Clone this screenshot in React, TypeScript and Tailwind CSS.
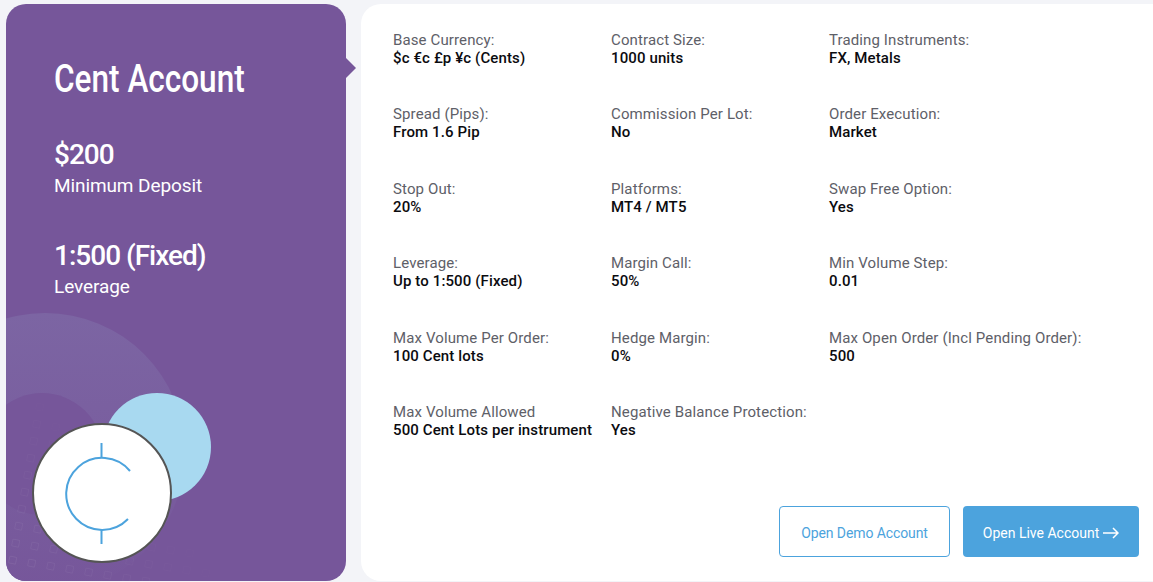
const specs = [
  ["Base Currency:", "$c €c £p ¥c (Cents)"],
  ["Contract Size:", "1000 units"],
  ["Trading Instruments:", "FX, Metals"],
  ["Spread (Pips):", "From 1.6 Pip"],
  ["Commission Per Lot:", "No"],
  ["Order Execution:", "Market"],
  ["Stop Out:", "20%"],
  ["Platforms:", "MT4 / MT5"],
  ["Swap Free Option:", "Yes"],
  ["Leverage:", "Up to 1:500 (Fixed)"],
  ["Margin Call:", "50%"],
  ["Min Volume Step:", "0.01"],
  ["Max Volume Per Order:", "100 Cent lots"],
  ["Hedge Margin:", "0%"],
  ["Max Open Order (Incl Pending Order):", "500"],
  ["Max Volume Allowed", "500 Cent Lots per instrument"],
  ["Negative Balance Protection:", "Yes"],
];

const squares: { x: number; y: number; opacity: number }[] = [];
for (let row = 0; row < 11; row++) {
  for (let col = 0; col < 13; col++) {
    const x = 4 + col * 19 + row * 3;
    const y = 282 - row * 17 + col * 3;
    const fade = 1 - (x + (290 - y)) / 230;
    if (fade > 0 && y < 304) {
      squares.push({ x, y, opacity: 0.07 * fade });
    }
  }
}

const CardArt = () => {
  return (
    <div className="absolute inset-0 overflow-hidden rounded-[20px]">
      <div className="absolute left-[-101px] top-[309px] h-[280px] w-[280px] rounded-full bg-linear-to-b from-[#7c65a3] to-[#76569a]" />
      <div className="absolute left-[-25px] top-[389px] h-[122px] w-[122px] rounded-full bg-[#76569a]" />
      <svg className="absolute left-0 top-[270px] h-[307px] w-[340px]" viewBox="0 0 340 307" fill="none">
        {squares.map((square, index) => (
          <rect
            key={index}
            x={square.x}
            y={square.y}
            width="7"
            height="7"
            rx="1"
            stroke="#ffffff"
            strokeOpacity={square.opacity}
            transform={`rotate(12 ${square.x} ${square.y})`}
          />
        ))}
      </svg>
      <div className="absolute left-[97px] top-[389px] h-[108px] w-[108px] rounded-full bg-[#a8d9f0]" />
      <div className="absolute left-[26px] top-[419px] flex h-[140px] w-[140px] items-center justify-center rounded-full border-2 border-[#555555] bg-white">
        <svg width="90" height="104" viewBox="0 0 90 104" fill="none" stroke="#4ca3dd" strokeWidth="2">
          <path d="M73 30A36 36 0 1 0 71 78" />
          <path d="M44.500 2V16M44.500 89V103" />
        </svg>
      </div>
    </div>
  );
};

export default function App() {
  return (
    <div className="flex h-[582px] w-[1153px] gap-[15px] overflow-hidden bg-[#f3f4f8] pb-px pl-[6px] pt-[4px] font-['Roboto',sans-serif]">
      <div className="relative w-[340px] shrink-0 rounded-[20px] bg-[#76569a] text-white">
        <CardArt />
        <div className="absolute right-[-10px] top-[54px] h-0 w-0 border-y-[10px] border-l-[10px] border-y-transparent border-l-[#76569a]" />
        <div className="relative flex flex-col pl-[48px] pt-[52px]">
          <h1 className="origin-left scale-x-[0.83] whitespace-nowrap text-[38px] font-medium leading-[46px]">Cent Account</h1>
          <p className="mt-[37px] text-[28px] font-medium leading-[32px] tracking-[-1px]">$200</p>
          <p className="mt-[3px] text-[19px] leading-[24px] tracking-[-0.1px]">Minimum Deposit</p>
          <p className="mt-[42px] text-[28px] font-medium leading-[32px] tracking-[-1px]">1:500 (Fixed)</p>
          <p className="mt-[3px] text-[19px] leading-[24px] tracking-[-0.1px]">Leverage</p>
        </div>
      </div>

      <div className="relative flex flex-1 flex-col rounded-l-[20px] bg-white pl-[32px] pt-[27px]">
        <div className="grid grid-cols-[218px_218px_1fr] auto-rows-[74.4px]">
          {specs.map(([label, value]) => (
            <div key={label} className="whitespace-nowrap text-[15px]">
              <p className="leading-[19px] tracking-[0.12px] text-[#5e6068]">{label}</p>
              <p className="mt-[-1px] font-medium leading-[18px] tracking-[0.12px] text-[#0b0b0f]">{value}</p>
            </div>
          ))}
        </div>
        <div className="absolute bottom-[24px] right-[14px] flex gap-[13px]">
          <a className="flex h-[51px] w-[171px] items-center justify-center rounded-[4px] border border-[#4ca3dd] pt-[3px] text-[14px] tracking-[-0.1px] text-[#4ca3dd]">
            Open Demo Account
          </a>
          <a className="flex h-[51px] w-[176px] items-center justify-center gap-[4px] rounded-[4px] bg-[#4ca3dd] pt-[3px] text-[14px] text-white">
            Open Live Account
            <svg width="16" height="12" viewBox="0 0 16 12" fill="none" stroke="#ffffff" strokeWidth="1.5">
              <path d="M0 6H15M10 1L15 6L10 11" />
            </svg>
          </a>
        </div>
      </div>
    </div>
  );
}
